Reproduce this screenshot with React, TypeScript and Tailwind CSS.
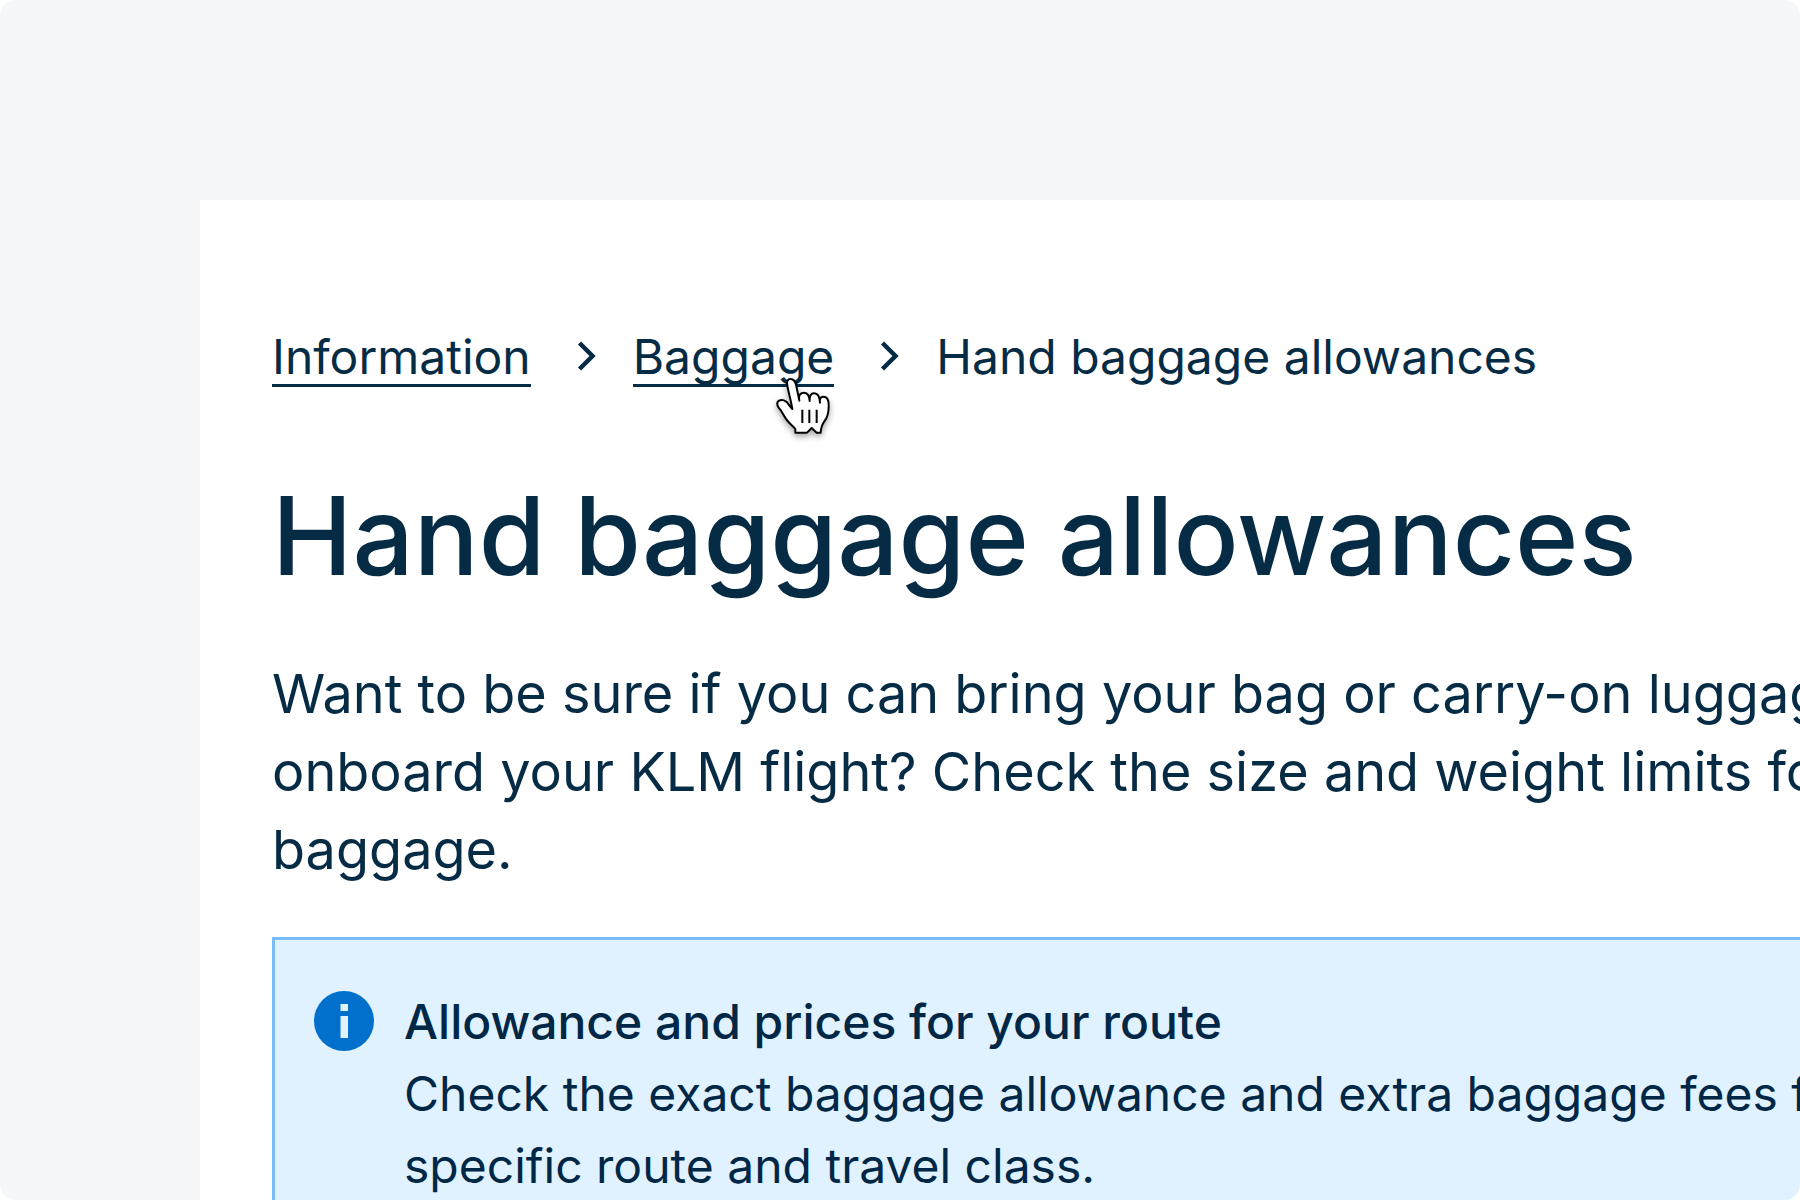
import React from 'react';

const breadcrumbs = [
  { label: 'Information', href: '#information' },
  { label: 'Baggage', href: '#baggage', active: true }
];

const ChevronIcon: React.FC = () => (
  <svg className="w-5 h-8 shrink-0" viewBox="0 0 20 32" fill="none" aria-hidden="true">
    <path d="M2.5 2 15.5 15 2.5 28" stroke="currentColor" strokeWidth="4.5" />
  </svg>
);

const InfoIcon: React.FC = () => (
  <svg className="w-[60px] h-[60px] mt-[5px] shrink-0" viewBox="0 0 60 60" aria-hidden="true">
    <circle cx="30" cy="30" r="30" fill="#0070cc" />
    <path d="M26.5 13h7.5v7h-7.5zM26.5 25h7.5v22h-7.5z" fill="#e0f1ff" />
  </svg>
);

const HandCursor: React.FC = () => (
  <svg
    className="absolute right-px top-[46px] w-[60px] h-[60px] overflow-visible drop-shadow-[0_3px_3px_rgba(0,0,0,0.35)]"
    viewBox="99 78 180 180"
    aria-hidden="true"
  >
    <path
      d="M166 248V237C157 225 147 220 139 208C129 194 126 184 116 173C110 165 110 156 117 152C128 147 140 153 147 165L157 177C154 156 145 126 142 106C139 92 144 87 151 87C160 87 165 92 168 104L178 152C175 137 180 128 191 128C202 128 208 136 209 153C208 138 213 130 222 130C234 130 239 139 240 158C238 146 242 140 250 140C260 140 266 148 266 164C267 188 263 201 253 214C247 222 243 231 242 248H230L215 234L201 248Z"
      fill="#fff"
      stroke="#000"
      strokeWidth="6"
      strokeLinejoin="round"
    />
    <path d="M187 179V219M208 179V219M230 179V219" stroke="#000" strokeWidth="6" />
  </svg>
);

const App: React.FC = () => {
  return (
    <div className="bg-white font-[Inter,sans-serif]">
      <div className="h-screen overflow-hidden rounded-2xl bg-[#f5f7f9] pt-[200px] pl-[200px]">
        <main className="min-h-full bg-white pt-[130px] pl-[72px] text-[#062b45] whitespace-nowrap">
          <nav aria-label="Breadcrumb">
            <ol className="flex items-center text-[48px] leading-[54px]">
              {breadcrumbs.map((crumb) => (
                <li key={crumb.label} className="flex items-center">
                  <a href={crumb.href} className="relative cursor-pointer">
                    <span className="block border-b-3 -mb-[3px]">{crumb.label}</span>
                    {crumb.active && <HandCursor />}
                  </a>
                  <span className="pl-[46px] pr-9">
                    <ChevronIcon />
                  </span>
                </li>
              ))}
              <li aria-current="page">Hand baggage allowances</li>
            </ol>
          </nav>

          <h1 className="mt-[88px] text-[108px] leading-[128px] font-medium">
            Hand baggage allowances
          </h1>

          <p className="mt-[55px] text-[54px] leading-[78px]">
            Want to be sure if you can bring your bag or carry-on luggage
            <br />
            onboard your KLM flight? Check the size and weight limits for hand
            <br />
            baggage.
          </p>

          {/* Notice */}
          <section className="mt-[48px] flex gap-[30px] border-3 border-r-0 border-[#78bcf8] bg-[#e0f1ff] py-[46px] pl-[39px] text-[#002846]">
            <InfoIcon />
            <div className="text-[48px] leading-[72px]">
              <h2 className="font-medium">Allowance and prices for your route</h2>
              <p>
                Check the exact baggage allowance and extra baggage fees for your
                <br />
                specific route and travel class.
              </p>
            </div>
          </section>
        </main>
      </div>
    </div>
  );
};

export default App;
